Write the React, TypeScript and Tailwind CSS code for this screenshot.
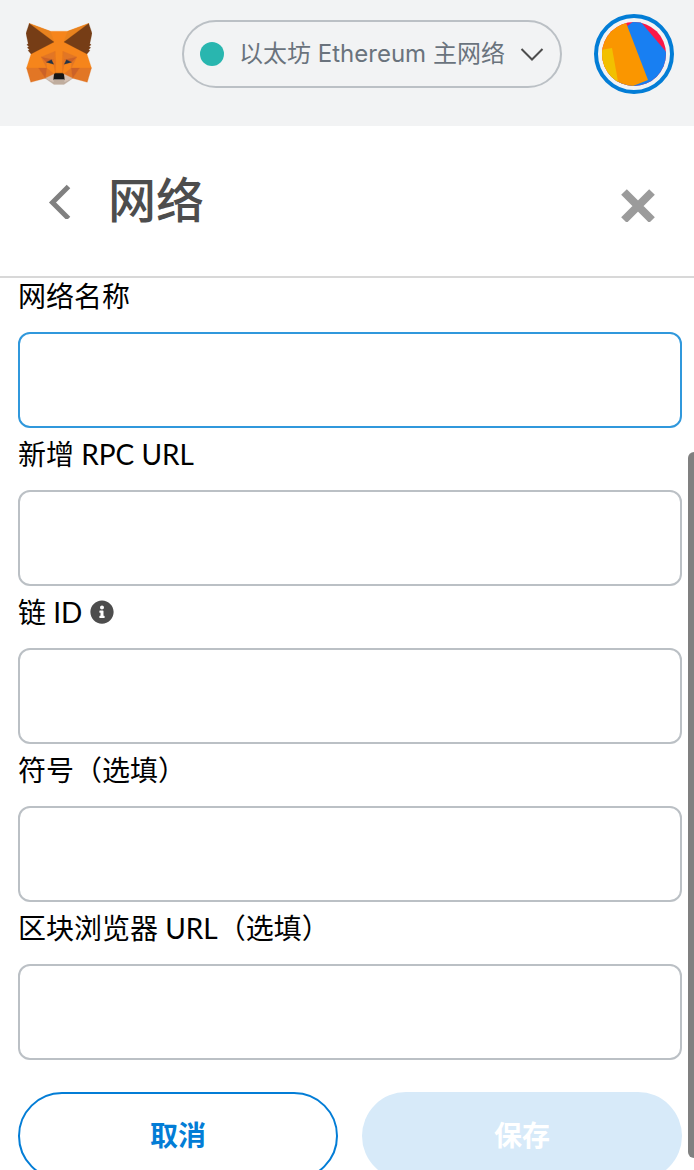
import { useState } from 'react';
import { FaInfoCircle } from 'react-icons/fa';

const FIELDS = [
    { id: 'name', label: '网络名称' },
    { id: 'rpcUrl', label: '新增 RPC URL' },
    { id: 'chainId', label: '链 ID', info: true },
    { id: 'symbol', label: '符号（选填）' },
    { id: 'explorerUrl', label: '区块浏览器 URL（选填）' },
];

const FOX_SHAPES: [string, string[]][] = [
    // head
    ['#f6851b', [
        '44.4,35.5 125.6,65.8 193.1,65.8 274.1,35.5 267.2,153.5 284.8,207.7 211.8,247.4 106.8,247.4 33.9,207.7 51.3,153.5',
    ]],
    // top edge of the ears
    ['#e8821e', ['44.4,35.5 140.6,106.9 125.6,65.8', '274.1,35.5 177.9,106.9 193.1,65.8']],
    ['#e27625', [
        '238.3,207.7 211.8,247.4 268.5,263 284.8,207.7',
        '33.9,207.7 50.1,263 106.8,247.4 80.3,207.7',
        '106.8,247.4 140.6,230.9 111.4,208.1',
        '177.9,230.9 211.8,247.4 207.1,208.1',
        '144.1,143 90,165 110.6,185.2 130.6,176.1 138.8,193.5',
        '174.6,143 228.6,165 208.1,185.2 188.1,176.1 179.8,193.5',
        '90,165 111.4,208.1 110.6,185.2',
        '208.1,185.2 207.1,208.1 228.6,165',
    ]],
    ['#cc6228', [
        '106.8,247.4 111.6,207.7 80.3,207.7',
        '207,207.7 211.8,247.4 238.3,207.7',
        '92,166 138.8,176 130.6,176.1 110.6,185.2',
        '226.6,166 179.8,176 188,176.1 208.1,185.2',
    ]],
    ['#e4751f', [
        '144.1,143 138.8,193.5 145.4,227.6 146.9,182.7',
        '174.6,143 171.9,182.6 173.1,227.6 179.8,193.5',
    ]],
    ['#233447', ['138.8,193.5 110.6,185.2 130.5,176.1', '179.7,193.5 188,176.1 208,185.2']],
    ['#d7c1b3', [
        '211.8,247.4 177.9,230.9 180.6,253 180.3,262.3',
        '106.8,247.4 138.3,262.3 138.1,253 140.6,230.9',
    ]],
    ['#c0ad9e', ['180.3,262.3 180.6,253 178.1,250.8 140.4,250.8 138.1,253 138.3,262.3 106.8,247.4 117.8,256.4 140.1,271.9 178.4,271.9 200.8,256.4 211.8,247.4']],
    ['#161616', ['177.9,230.9 173.1,227.6 145.4,227.6 140.6,230.9 138.1,253 140.4,250.8 178.1,250.8 180.6,253']],
    // ears
    ['#763d16', [
        '278.3,114.2 286.8,73.4 274.1,35.5 178.5,107.5 267.2,153.5 278.8,140 273.8,136.4 281.8,129.1 275.6,124.3 283.6,118.2',
        '31.8,73.4 40.3,114.2 34.9,118.2 42.9,124.3 36.8,129.1 44.8,136.4 39.8,140 51.3,153.5 140,107.5 44.4,35.5',
    ]],
];

function FoxLogo() {
    return (
        <svg viewBox="31.8 35.5 255 236.4" className="w-[66px] h-[62px] shrink-0">
            {FOX_SHAPES.map(([fill, shapes]) => shapes.map(points => (
                <polygon key={points} points={points} fill={fill} stroke={fill} strokeLinejoin="round" />
            )))}
        </svg>
    );
}

function Identicon() {
    return (
        <svg viewBox="0 0 64 64" className="w-16 h-16 rounded-full">
            <rect width="64" height="64" fill="#fb1848" />
            <polygon points="24,5 32,-1 38,-1 65,31 65,65 0,65" fill="#187ff2" />
            <polygon points="-10,10 23,-2 46,58 26,66 -10,70" fill="#fa9600" />
            <polygon points="-1,28 10,26 17,65 -1,65" fill="#f2c000" />
        </svg>
    );
}

function AppHeader() {
    return (
        <header className="flex items-center justify-between bg-[#f2f3f4] pl-[26px] pr-5 pt-[14px] pb-8 shrink-0">
            <FoxLogo />
            <div className="flex items-center gap-8">
                <button className="flex items-center w-[380px] h-[68px] px-4 rounded-full border-2 border-[#bbc0c5]">
                    <span className="w-6 h-6 rounded-full bg-[#29b6af] shrink-0" />
                    <span className="flex-1 text-2xl text-[#6a737d] text-center whitespace-nowrap">以太坊 Ethereum 主网络</span>
                    <svg viewBox="0 0 24 24" className="w-6 h-6 shrink-0" fill="none" stroke="#4d4d4d" strokeWidth="2">
                        <path d="M1.5 7 L12 17.5 L22.5 7" />
                    </svg>
                </button>
                <button aria-label="我的账户" className="p-1 rounded-full border-4 border-[#037dd6]">
                    <Identicon />
                </button>
            </div>
        </header>
    );
}

export default function App() {
    const [values, setValues] = useState<Record<string, string>>({});

    return (
        <div className="relative flex flex-col h-screen overflow-hidden bg-white font-['Inter','Noto_Sans_CJK_SC',sans-serif]">
            <AppHeader />

            <div className="flex items-center h-[152px] pl-12 pr-[39px] border-b-2 border-[#d8d8d8] shrink-0">
                <button aria-label="返回">
                    <svg viewBox="0 0 24 36" className="w-6 h-9" fill="none" stroke="#808080" strokeWidth="5">
                        <path d="M20.5 3.5 L4.5 19.5 L20.5 35.5" />
                    </svg>
                </button>
                <h1 className="flex-1 pl-9 text-5xl font-medium text-[#4d4d4d]">网络</h1>
                <button aria-label="关闭" className="pt-2">
                    <svg viewBox="0 0 34 34" className="w-[34px] h-[34px]" fill="none" stroke="#9b9b9b" strokeWidth="8">
                        <path d="M3 4 L31 32 M31 4 L3 32" />
                    </svg>
                </button>
            </div>

            <form className="pl-[18px] pr-3" onSubmit={e => e.preventDefault()}>
                {FIELDS.map((f, i) => (
                    <div key={f.id} className="mb-2">
                        <div className="flex items-center gap-2 h-9 mb-[18px]">
                            <label htmlFor={f.id} className="font-['Lato','Noto_Sans_CJK_SC',sans-serif] text-[28px] leading-9 text-black">{f.label}</label>
                            {f.info && <FaInfoCircle size={24} color="#4d4d4d" />}
                        </div>
                        <input
                            id={f.id}
                            value={values[f.id] || ''}
                            onChange={e => setValues({ ...values, [f.id]: e.target.value })}
                            className={`block w-full h-24 px-4 text-[28px] rounded-xl border-2 outline-none ${i === 0 ? 'border-[#3098dc]' : 'border-[#bbc0c5]'}`}
                        />
                    </div>
                ))}

                <div className="grid grid-cols-2 gap-6 pt-6">
                    <button type="button" className="h-[88px] rounded-full border-2 border-[#037dd6] text-[28px] font-bold text-[#037dd6]">取消</button>
                    <button type="submit" disabled className="h-[88px] rounded-full bg-[#d7eaf9] text-[28px] font-bold text-white">保存</button>
                </div>
            </form>

            {/* scroll thumb */}
            <div className="absolute right-0 top-[452px] bottom-3 w-[6px] rounded-l-full bg-[#808080]" />
        </div>
    );
}
